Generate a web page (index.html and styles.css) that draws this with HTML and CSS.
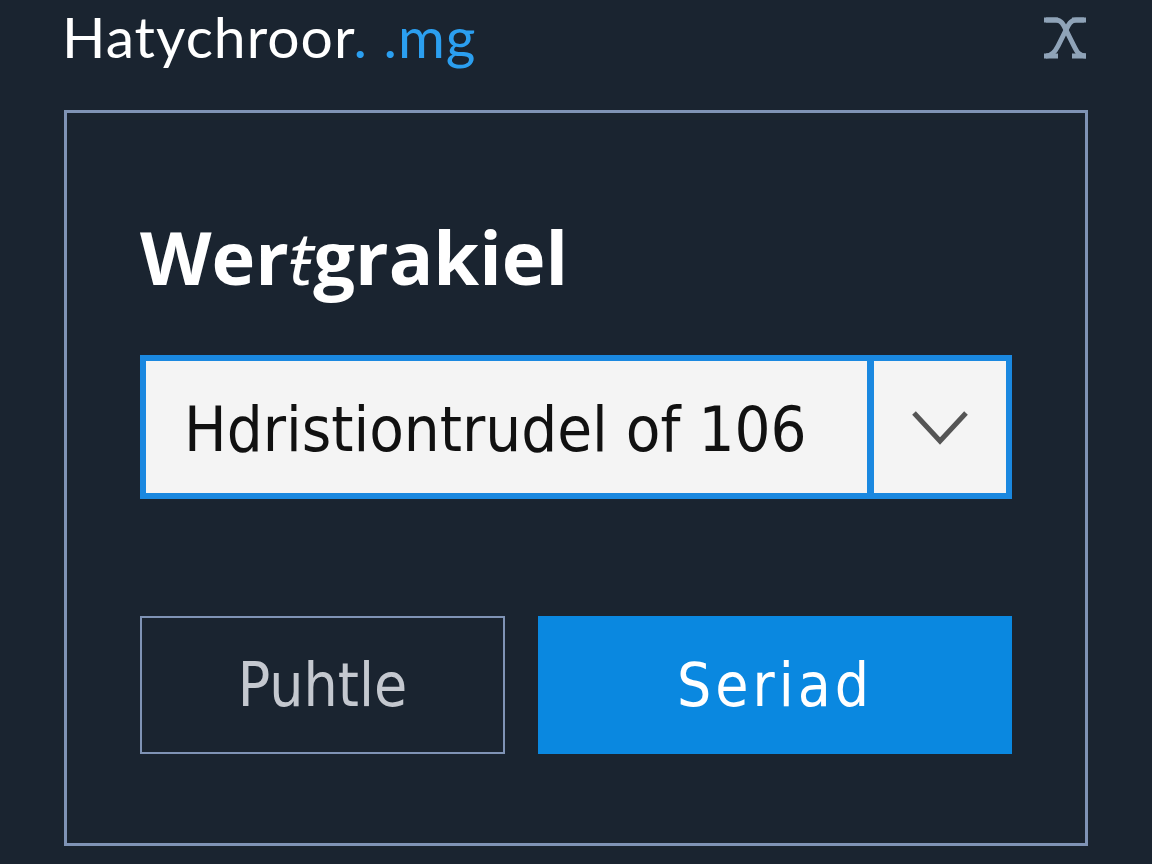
FILE: index.html
```html
<!DOCTYPE html>
<html>
<head>
<meta charset="utf-8">
<link rel="stylesheet" href="styles.css">
</head>
<body>
<div class="screen">
  <header class="topbar">
    <h1 class="app-title">Hatychroor<span class="accent">. .mg</span></h1>
    <button class="close" aria-label="Close">
      <svg width="50" height="44" viewBox="0 0 50 44">
        <path d="M6 4 H16 C22 4 24 10 27 16 L34 30 C37 36 39 40 46 40" fill="none" stroke="#8fa3b8" stroke-width="5"/>
        <path d="M44 4 H36 C30 4 28 10 25 16 L18 30 C15 36 12 40 6 40" fill="none" stroke="#8fa3b8" stroke-width="5"/>
        <path d="M4 4 H18 M32 4 H46 M4 40 H18 M32 40 H46" stroke="#8fa3b8" stroke-width="5"/>
      </svg>
    </button>
  </header>
  <main class="dialog">
    <h2 class="dialog-title">Wer<span class="odd">ŧ</span>grakiel</h2>
    <div class="select">
      <div class="select-value">Hdristiontrudel of 106</div>
      <div class="select-arrow">
        <svg width="60" height="40" viewBox="0 0 60 40">
          <path d="M4 6 L30 34 L56 6" fill="none" stroke="#555" stroke-width="5"/>
        </svg>
      </div>
    </div>
    <div class="actions">
      <button class="btn btn-outline">Puhtle</button>
      <button class="btn btn-primary">Seriad</button>
    </div>
  </main>
</div>
</body>
</html>
```

FILE: styles.css
```css
html, body {
  margin: 0;
  padding: 0;
  background: #1a2430;
}
.screen {
  width: 1152px;
  height: 864px;
  box-sizing: border-box;
  padding: 0 64px 18px 64px;
  display: flex;
  flex-direction: column;
}
.topbar {
  height: 110px;
  display: flex;
  justify-content: space-between;
  align-items: flex-start;
}
.app-title {
  margin: 4px 0 0 -2px;
  font-family: Lato, "Open Sans", sans-serif;
  font-weight: 400;
  font-size: 57px;
  letter-spacing: 1px;
  line-height: 64px;
  color: #ffffff;
}
.accent {
  color: #2b9ff0;
}
.close {
  margin: 16px -2px 0 0;
  padding: 0;
  border: 0;
  background: none;
  width: 50px;
  height: 44px;
}
.dialog {
  flex: 1;
  border: 3px solid #7f93b5;
  padding: 0 73px;
  display: flex;
  flex-direction: column;
}
.dialog-title {
  margin: 104px 0 0 0;
  font-family: "Open Sans", "Noto Sans", sans-serif;
  font-weight: 700;
  font-size: 74px;
  line-height: 80px;
  color: #ffffff;
}
.odd {
  font-style: italic;
  font-weight: 400;
}
.select {
  margin-top: 58px;
  height: 144px;
  box-sizing: border-box;
  border: 6px solid #1a88e0;
  display: flex;
  background: #1a88e0;
}
.select-value {
  flex: 1;
  background: #f4f4f4;
  font-family: "DejaVu Sans Condensed", "DejaVu Sans", sans-serif;
  font-size: 63px;
  color: #111;
  display: flex;
  align-items: center;
  padding-left: 38px;
  padding-top: 4px;
}
.select-arrow {
  width: 132px;
  margin-left: 7px;
  background: #f4f4f4;
  display: flex;
  align-items: center;
  justify-content: center;
}
.actions {
  margin-top: 117px;
  display: flex;
  gap: 33px;
}
.btn {
  height: 138px;
  font-family: "DejaVu Sans Condensed", "DejaVu Sans", sans-serif;
  font-size: 60px;
  padding: 0;
  cursor: pointer;
}
.btn-outline {
  width: 365px;
  background: transparent;
  border: 2px solid #7f93b5;
  color: #c4c8cf;
}
.btn-primary {
  width: 474px;
  background: #0a88e0;
  border: 0;
  color: #ffffff;
  letter-spacing: 4px;
}
```
